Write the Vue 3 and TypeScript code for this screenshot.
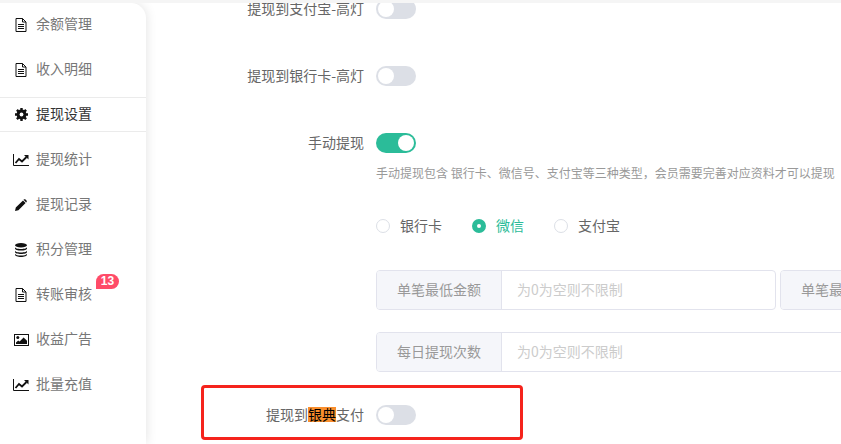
<script setup lang="ts">
const menu = [
  { label: '余额管理', icon: 'file' },
  { label: '收入明细', icon: 'file' },
  { label: '提现设置', icon: 'cog', active: true },
  { label: '提现统计', icon: 'chart' },
  { label: '提现记录', icon: 'pencil' },
  { label: '积分管理', icon: 'database' },
  { label: '转账审核', icon: 'file', badge: 13 },
  { label: '收益广告', icon: 'picture' },
  { label: '批量充值', icon: 'chart' }
]
</script>

<template>
  <div class="page">
    <aside class="sidebar">
      <div v-for="item in menu" :key="item.label" class="menu-item" :class="{ active: item.active }">
        <span class="icon">
          <svg v-if="item.icon === 'file'" width="12" height="14" viewBox="0 0 12 14">
            <path d="M1 .5h6.5L11 4v9.5H1z" fill="none" stroke="#111" stroke-width="1" />
            <path d="M7.5.5V4H11M3 6.5h6M3 8.5h6M3 10.5h6" fill="none" stroke="#111" stroke-width="1" />
          </svg>
          <svg v-else-if="item.icon === 'cog'" width="13" height="13" viewBox="0 0 13 13">
            <path d="M6.5 0v13M0 6.5h13M1.9 1.9l9.2 9.2M11.1 1.9l-9.2 9.2" stroke="#111" stroke-width="2.4" />
            <circle cx="6.5" cy="6.5" r="3.6" fill="none" stroke="#111" stroke-width="2.6" />
            <circle cx="6.5" cy="6.5" r="1.9" fill="#fff" />
          </svg>
          <svg v-else-if="item.icon === 'chart'" width="16" height="12" viewBox="0 0 16 12">
            <path d="M.5 0v11.5H16" fill="none" stroke="#111" stroke-width="1" />
            <path d="M2.5 9l3.5-4 3 2.5L13.5 3" fill="none" stroke="#111" stroke-width="1.8" />
            <path d="M11 1H15.5V5.5z" fill="#111" />
          </svg>
          <svg v-else-if="item.icon === 'pencil'" width="12" height="12" viewBox="0 0 12 12">
            <path d="M0 12l.8-3.4L8 1.4 10.6 4 3.4 11.2zM8.8.6c.6-.6 1.2-.6 1.7-.1l1 1c.5.5.5 1.1 0 1.6l-.3.3-2.7-2.6z" fill="#111" />
          </svg>
          <svg v-else-if="item.icon === 'database'" width="12" height="14" viewBox="0 0 12 14">
            <ellipse cx="6" cy="2.2" rx="6" ry="2.2" fill="#111" />
            <path d="M0 4v1.4C0 6.6 2.7 7.6 6 7.6s6-1 6-2.2V4C12 5.2 9.3 6 6 6S0 5.2 0 4z" fill="#111" />
            <path d="M0 7.4v1.6C0 10.2 2.7 11 6 11s6-.8 6-2V7.4C12 8.6 9.3 9.4 6 9.4S0 8.6 0 7.4z" fill="#111" />
            <path d="M0 10.6V11.8C0 13 2.7 14 6 14s6-1 6-2.2v-1.2c0 1.2-2.7 2-6 2s-6-.8-6-2z" fill="#111" />
          </svg>
          <svg v-else width="15" height="12" viewBox="0 0 15 12">
            <rect x=".5" y=".5" width="14" height="11" fill="none" stroke="#111" stroke-width="1" />
            <circle cx="3.8" cy="3.6" r="1.5" fill="#111" />
            <path d="M2 10V8.4l2.2-2 1.4 1.2L9.6 3.4 13 6.8V10z" fill="#111" />
          </svg>
        </span>
        <span class="menu-label">{{ item.label }}</span>
        <span v-if="item.badge" class="badge">{{ item.badge }}</span>
      </div>
    </aside>

    <main class="content">
      <div class="form">
        <div class="row">
          <label class="label">提现到支付宝-高灯</label>
          <span class="switch"></span>
        </div>
        <div class="row row-gap">
          <label class="label">提现到银行卡-高灯</label>
          <span class="switch"></span>
        </div>
        <div class="row row-gap">
          <label class="label">手动提现</label>
          <span class="switch on"></span>
        </div>
        <p class="hint">手动提现包含 银行卡、微信号、支付宝等三种类型，会员需要完善对应资料才可以提现</p>
        <div class="radios">
          <span class="radio"><i class="dot"></i><span class="radio-text">银行卡</span></span>
          <span class="radio checked"><i class="dot"></i><span class="radio-text">微信</span></span>
          <span class="radio"><i class="dot"></i><span class="radio-text">支付宝</span></span>
        </div>
        <div class="inputs">
          <div class="input-group">
            <span class="addon">单笔最低金额</span>
            <span class="input">为0为空则不限制</span>
          </div>
          <div class="input-group">
            <span class="addon">单笔最高金额</span>
            <span class="input">为0为空则不限制</span>
          </div>
        </div>
        <div class="inputs second">
          <div class="input-group wide">
            <span class="addon">每日提现次数</span>
            <span class="input">为0为空则不限制</span>
          </div>
        </div>
        <div class="row last">
          <label class="label">提现到<mark>银典</mark>支付</label>
          <span class="switch"></span>
        </div>
      </div>
      <div class="callout"></div>
    </main>
  </div>
</template>

<style scoped>
.page {
  display: flex;
  width: 841px;
  height: 444px;
  border-top: 3px solid #f5f5f5;
  box-sizing: border-box;
  overflow: hidden;
  background: #fff;
  font-family: "Noto Sans CJK SC", "Liberation Sans", sans-serif;
  font-size: 14px;
  color: #666;
}

.sidebar {
  flex: none;
  width: 146px;
  padding-top: 4px;
  box-sizing: border-box;
  background: #fff;
  border-top-right-radius: 15px;
  box-shadow: 0 0 12px rgba(0, 0, 0, 0.12);
}

.menu-item {
  position: relative;
  display: flex;
  align-items: center;
  height: 35px;
  margin-bottom: 10px;
  box-sizing: border-box;
  color: #777;
}

.menu-item.active {
  border-top: 1px solid #ebebeb;
  border-bottom: 1px solid #ebebeb;
  color: #333;
}

.menu-label {
  padding-bottom: 3px;
}

.icon {
  display: flex;
  justify-content: center;
  align-items: center;
  width: 16px;
  margin: 0 7px 0 13px;
}

.badge {
  position: absolute;
  left: 96px;
  top: -3px;
  width: 23px;
  height: 15px;
  border-radius: 8px 8px 8px 0;
  background: #ff4b68;
  color: #fff;
  font: 700 12px/15px "Liberation Sans", sans-serif;
  text-align: center;
}

.content {
  position: relative;
  flex: none;
  width: 683px;
  margin-left: 12px;
  height: 441px;
  overflow: hidden;
  background: #fff;
}

.form {
  margin-top: -4px;
}

.row {
  display: flex;
  align-items: center;
  height: 20px;
}

.row-gap {
  margin-top: 47px;
}

.row.last {
  margin-top: 33px;
}

.label {
  width: 206px;
  margin-right: 12px;
  padding-bottom: 2px;
  text-align: right;
  line-height: 20px;
}

mark {
  display: inline-block;
  height: 15px;
  background: #f98e2d;
  color: #000;
  line-height: 15px;
}

.switch {
  position: relative;
  display: block;
  width: 40px;
  height: 20px;
  border-radius: 10px;
  background: #dcdfe6;
}

.switch::after {
  content: "";
  position: absolute;
  left: 2px;
  top: 2px;
  width: 16px;
  height: 16px;
  border-radius: 50%;
  background: #fff;
}

.switch.on {
  background: #2bbc99;
}

.switch.on::after {
  left: 22px;
}

.hint {
  margin: 10px 0 0 218px;
  font-size: 12px;
  line-height: 20px;
  color: #999;
  white-space: nowrap;
}

.radios {
  display: flex;
  gap: 30px;
  height: 20px;
  margin: 33px 0 0 218px;
  align-items: center;
}

.radio {
  display: flex;
  align-items: center;
  color: #666;
}

.radio-text {
  padding-bottom: 2px;
}

.radio.checked {
  color: #2bbc99;
}

.dot {
  width: 14px;
  height: 14px;
  margin-right: 10px;
  box-sizing: border-box;
  border: 1px solid #dcdfe6;
  border-radius: 50%;
}

.checked .dot {
  border: 5px solid #2bbc99;
  background: #fff;
}

.inputs {
  display: flex;
  gap: 4px;
  margin: 34px 0 0 218px;
}

.inputs.second {
  margin-top: 22px;
}

.input-group {
  flex: none;
  display: flex;
  width: 400px;
  height: 40px;
  box-sizing: border-box;
  border: 1px solid #e2e3ed;
  border-radius: 4px;
}

.input-group.wide {
  width: 640px;
}

.addon {
  flex: none;
  width: 125px;
  box-sizing: border-box;
  border-right: 1px solid #e2e3ed;
  background: #f5f6fa;
  border-radius: 3px 0 0 3px;
  color: #999;
  line-height: 36px;
  text-align: center;
}

.input {
  padding-left: 15px;
  color: #ccc;
  line-height: 36px;
}

.callout {
  position: absolute;
  left: 43px;
  top: 382px;
  width: 322px;
  height: 55px;
  box-sizing: border-box;
  border: 3px solid #f5231c;
  border-radius: 4px;
}
</style>
